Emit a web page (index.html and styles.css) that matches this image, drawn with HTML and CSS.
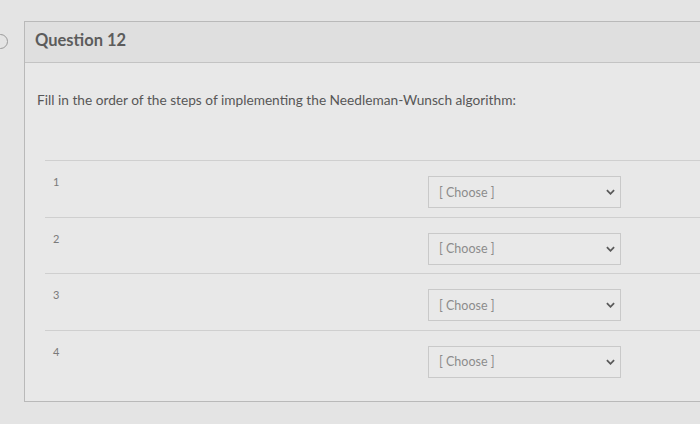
FILE: index.html
```html
<!DOCTYPE html>
<html>
<head>
<meta charset="utf-8">
<link rel="stylesheet" href="styles.css">
</head>
<body>
<div class="page">
  <span class="nav-dot"></span>
  <div class="card">
    <div class="card-head">
      <h2 class="title">Question 12</h2>
    </div>
    <div class="card-body">
      <p class="prompt">Fill in the order of the steps of implementing the Needleman-Wunsch algorithm:</p>
      <div class="answers">
        <div class="row">
          <span class="num">1</span>
          <div class="select"><span class="sel-text">[ Choose ]</span><svg class="chev" viewBox="0 0 10 6" width="9" height="6"><path d="M1 1 L5 5 L9 1" fill="none" stroke="#5a5a5a" stroke-width="2"/></svg></div>
        </div>
        <div class="row">
          <span class="num">2</span>
          <div class="select"><span class="sel-text">[ Choose ]</span><svg class="chev" viewBox="0 0 10 6" width="9" height="6"><path d="M1 1 L5 5 L9 1" fill="none" stroke="#5a5a5a" stroke-width="2"/></svg></div>
        </div>
        <div class="row">
          <span class="num">3</span>
          <div class="select"><span class="sel-text">[ Choose ]</span><svg class="chev" viewBox="0 0 10 6" width="9" height="6"><path d="M1 1 L5 5 L9 1" fill="none" stroke="#5a5a5a" stroke-width="2"/></svg></div>
        </div>
        <div class="row last">
          <span class="num">4</span>
          <div class="select"><span class="sel-text">[ Choose ]</span><svg class="chev" viewBox="0 0 10 6" width="9" height="6"><path d="M1 1 L5 5 L9 1" fill="none" stroke="#5a5a5a" stroke-width="2"/></svg></div>
        </div>
      </div>
    </div>
  </div>
</div>
</body>
</html>
```

FILE: styles.css
```css
html, body {
  margin: 0;
  padding: 0;
}
body {
  background: #e4e4e4;
  font-family: Lato, "Open Sans", "Liberation Sans", sans-serif;
  width: 700px;
  height: 424px;
  overflow: hidden;
}
.page {
  position: relative;
  padding: 21px 0 0 24px;
}
.nav-dot {
  position: absolute;
  left: -7px;
  top: 34px;
  width: 13px;
  height: 13px;
  border: 1.5px solid #9a9a9a;
  border-radius: 50%;
}
.card {
  border: 1px solid #b9b9b9;
  border-right: none;
  width: 700px;
  background: #e8e8e8;
}
.card-head {
  height: 41px;
  box-sizing: border-box;
  background: #dfdfdf;
  border-bottom: 1px solid #c3c3c3;
  padding: 8px 0 0 10px;
}
.title {
  margin: 0;
  font-size: 16.5px;
  line-height: 20px;
  font-weight: 700;
  color: #5c5c5c;
}
.card-body {
  padding: 29px 0 0 0;
}
.prompt {
  margin: 0 0 0 12px;
  font-size: 13.7px;
  color: #575757;
  line-height: 16px;
}
.answers {
  margin: 52px 0 0 20px;
}
.row {
  display: flex;
  align-items: flex-start;
  border-top: 1px solid #cfcfcf;
  height: 55.5px;
  padding-left: 6px;
}
.row.last {
  height: 70px;
}
.num {
  width: 375px;
  font-size: 11px;
  color: #7a7a7a;
  margin-top: 14px;
  padding-left: 2px;
}
.select {
  margin-top: 15px;
  width: 176px;
  height: 30px;
  border: 1px solid #c9c9c9;
  background: #e9e9e9;
  display: flex;
  align-items: center;
  justify-content: space-between;
  padding: 0 5px 0 10px;
  box-sizing: content-box;
}
.sel-text {
  font-size: 12.5px;
  color: #8c8c8c;
}
.chev {
  display: block;
}
```
